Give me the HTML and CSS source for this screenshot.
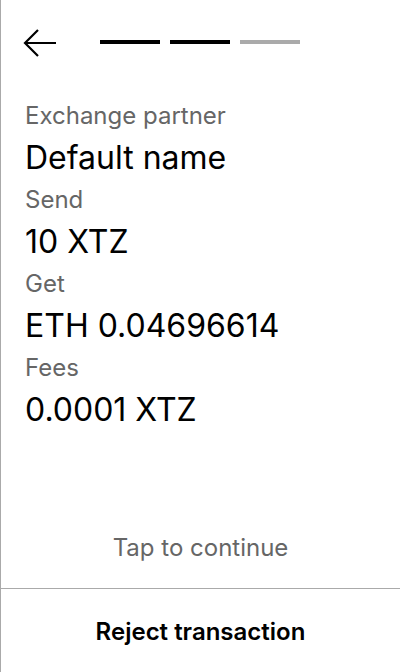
FILE: index.html
```html
<!DOCTYPE html>
<html>
<head>
<meta charset="utf-8">
<link rel="stylesheet" href="styles.css">
</head>
<body>
<div class="screen">
  <header class="header">
    <svg class="back" width="34" height="30" viewBox="0 0 34 30" aria-label="Back">
      <path d="M33 15H2M15 2L2 15l13 13" fill="none" stroke="#000" stroke-width="2.2"/>
    </svg>
    <div class="steps">
      <span class="step done"></span>
      <span class="step done"></span>
      <span class="step"></span>
    </div>
  </header>
  <main class="content">
    <div class="label">Exchange partner</div>
    <div class="value">Default name</div>
    <div class="label">Send</div>
    <div class="value">10 XTZ</div>
    <div class="label">Get</div>
    <div class="value">ETH 0.04696614</div>
    <div class="label">Fees</div>
    <div class="value">0.0001 XTZ</div>
  </main>
  <div class="tap">Tap to continue</div>
  <footer class="footer">
    <button class="reject">Reject transaction</button>
  </footer>
</div>
</body>
</html>
```
FILE: styles.css
```css
* { box-sizing: border-box; }
html, body { margin: 0; padding: 0; background: #fff; }
body { font-family: Inter, "Noto Sans", sans-serif; color: #000; }
.screen {
  width: 400px;
  height: 672px;
  border-left: 1px solid #aaa;
  display: flex;
  flex-direction: column;
}
.header {
  height: 86px;
  display: flex;
  align-items: center;
  padding-left: 22px;
}
.back { display: block; }
.steps {
  display: flex;
  gap: 10px;
  margin-left: 43px;
  margin-top: -2px;
}
.step {
  width: 60px;
  height: 4px;
  background: #aaa;
}
.step.done { background: #000; }
.content {
  padding: 10px 24px 0;
}
.label {
  font-size: 24px;
  line-height: 40px;
  color: #666;
}
.value {
  font-size: 32px;
  line-height: 40px;
  padding: 2px 0;
}
.tap {
  margin-top: auto;
  text-align: center;
  font-size: 24px;
  line-height: 40px;
  color: #666;
  padding-bottom: 20px;
}
.footer {
  height: 84px;
  border-top: 1px solid #aaa;
  display: flex;
}
.reject {
  flex: 1;
  border: 0;
  background: none;
  font-family: Inter, "Noto Sans", sans-serif;
  font-size: 24px;
  font-weight: 600;
  color: #000;
  padding: 2px 0 0;
}
```
